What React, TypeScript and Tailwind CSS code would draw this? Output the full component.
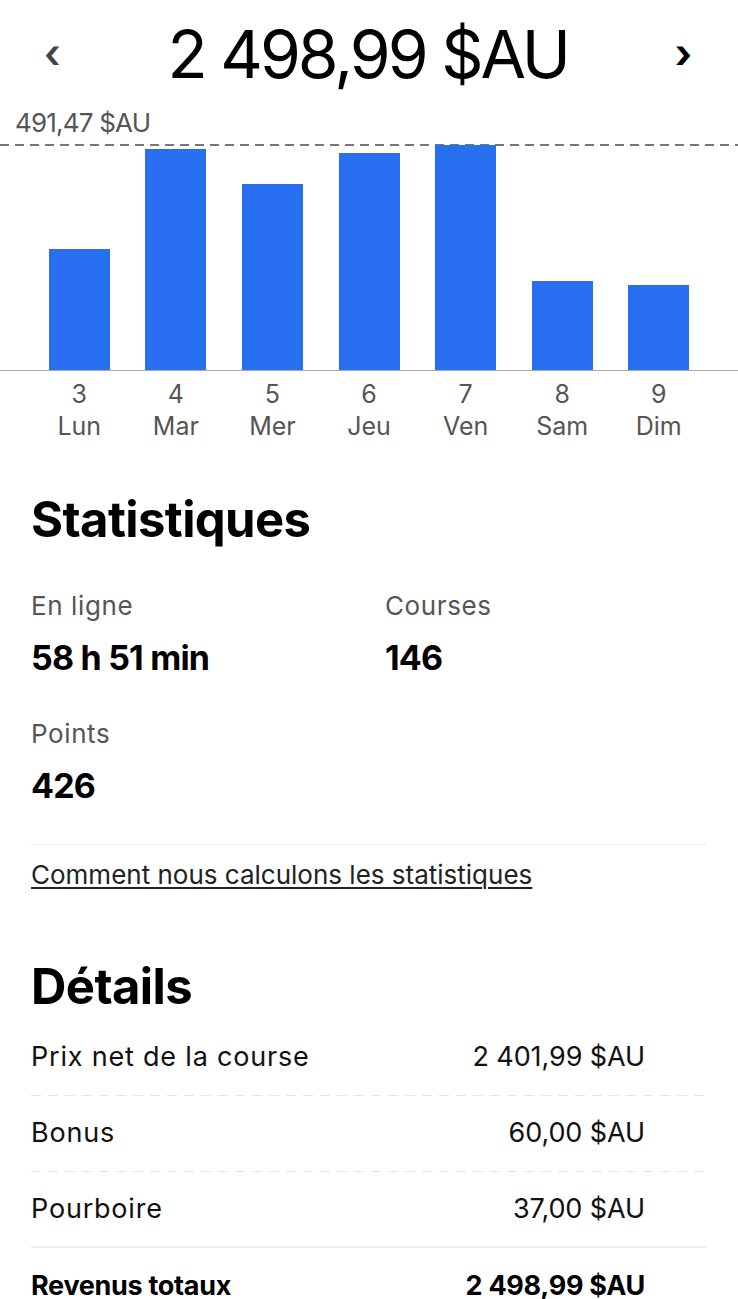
import React from 'react';

const days = [
  { n: '3', d: 'Lun', h: 121 },
  { n: '4', d: 'Mar', h: 221 },
  { n: '5', d: 'Mer', h: 186 },
  { n: '6', d: 'Jeu', h: 217 },
  { n: '7', d: 'Ven', h: 225 },
  { n: '8', d: 'Sam', h: 89 },
  { n: '9', d: 'Dim', h: 85 },
];

const details = [
  { label: 'Prix net de la course', value: '2 401,99 $AU' },
  { label: 'Bonus', value: '60,00 $AU' },
  { label: 'Pourboire', value: '37,00 $AU' },
];

export default function App() {
  return (
    <div
      className="w-[738px] h-[1299px] overflow-hidden bg-white text-black"
      style={{ fontFamily: 'Inter, Roboto, "Liberation Sans", sans-serif' }}
    >
      {/* Week total */}
      <div className="flex items-center justify-between h-[108px] pl-[44px] pr-[46px]">
        <span className="text-[40px] leading-none text-[#444] font-semibold">‹</span>
        <h1 className="text-[66px] leading-none tracking-[-3px] font-normal">2 498,99 $AU</h1>
        <span className="text-[40px] leading-none text-black font-bold">›</span>
      </div>

      {/* Chart */}
      <div className="pl-[15px] h-[30px] text-[26px] leading-[30px] text-[#555] tracking-[-0.8px]">491,47 $AU</div>
      <div className="mt-[6px] h-[2px] bg-[repeating-linear-gradient(to_right,#777_0_9px,transparent_9px_15px)]" />
      <div className="flex items-end h-[224px] px-[31px]">
        {days.map((day) => (
          <div key={day.d} className="flex-1 flex justify-center">
            <div className="w-[61px] bg-[#276ef1]" style={{ height: day.h }} />
          </div>
        ))}
      </div>
      <div className="border-t border-[#aaa]" />
      <div className="flex px-[31px] pt-[7px]">
        {days.map((day) => (
          <div key={day.d} className="flex-1 flex flex-col items-center text-[25px] leading-[32px] text-[#555]">
            <span>{day.n}</span>
            <span>{day.d}</span>
          </div>
        ))}
      </div>

      {/* Statistiques */}
      <div className="px-[31px]">
        <h2 className="mt-[50px] text-[49px] leading-[56px] font-bold tracking-[-0.6px]">Statistiques</h2>
        <div className="grid grid-cols-2 mt-[41px] gap-y-[39px]">
          <div>
            <div className="text-[26px] leading-[34px] text-[#555] tracking-[0.6px]">En ligne</div>
            <div className="mt-[15px] text-[34px] leading-[40px] font-bold tracking-[-0.8px]">58 h 51 min</div>
          </div>
          <div className="pl-[16px]">
            <div className="text-[26px] leading-[34px] text-[#555] tracking-[0.6px]">Courses</div>
            <div className="mt-[15px] text-[34px] leading-[40px] font-bold tracking-[-0.8px]">146</div>
          </div>
          <div>
            <div className="text-[26px] leading-[34px] text-[#555] tracking-[0.6px]">Points</div>
            <div className="mt-[15px] text-[34px] leading-[40px] font-bold tracking-[-0.8px]">426</div>
          </div>
        </div>
        <div className="mt-[38px] border-t border-[#eee]" />
        <a className="block mt-[13px] text-[26px] leading-[34px] text-[#222] underline underline-offset-[3px] decoration-[1.5px]">
          Comment nous calculons les statistiques
        </a>

        {/* Détails */}
        <h2 className="mt-[67px] text-[49px] leading-[56px] font-bold tracking-[-0.6px]">Détails</h2>
        <div className="mt-[5px]">
          {details.map((row, i) => (
            <div key={row.label} className="flex flex-col h-[76px]">
              <div className="flex-1 flex items-center justify-between pr-[62px] text-[27px] text-[#111]">
                <span className="tracking-[0.8px]">{row.label}</span>
                <span className="tracking-[-0.1px]">{row.value}</span>
              </div>
              {i < 2 ? (
                <div className="h-px bg-[repeating-linear-gradient(to_right,#e6e6e6_0_10px,transparent_10px_17px)]" />
              ) : (
                <div className="h-[2px] bg-[#eee]" />
              )}
            </div>
          ))}
          <div className="flex items-center justify-between h-[76px] pr-[62px] text-[27px] font-bold tracking-[-0.3px]">
            <span>Revenus totaux</span>
            <span>2 498,99 $AU</span>
          </div>
        </div>
      </div>
    </div>
  );
}
